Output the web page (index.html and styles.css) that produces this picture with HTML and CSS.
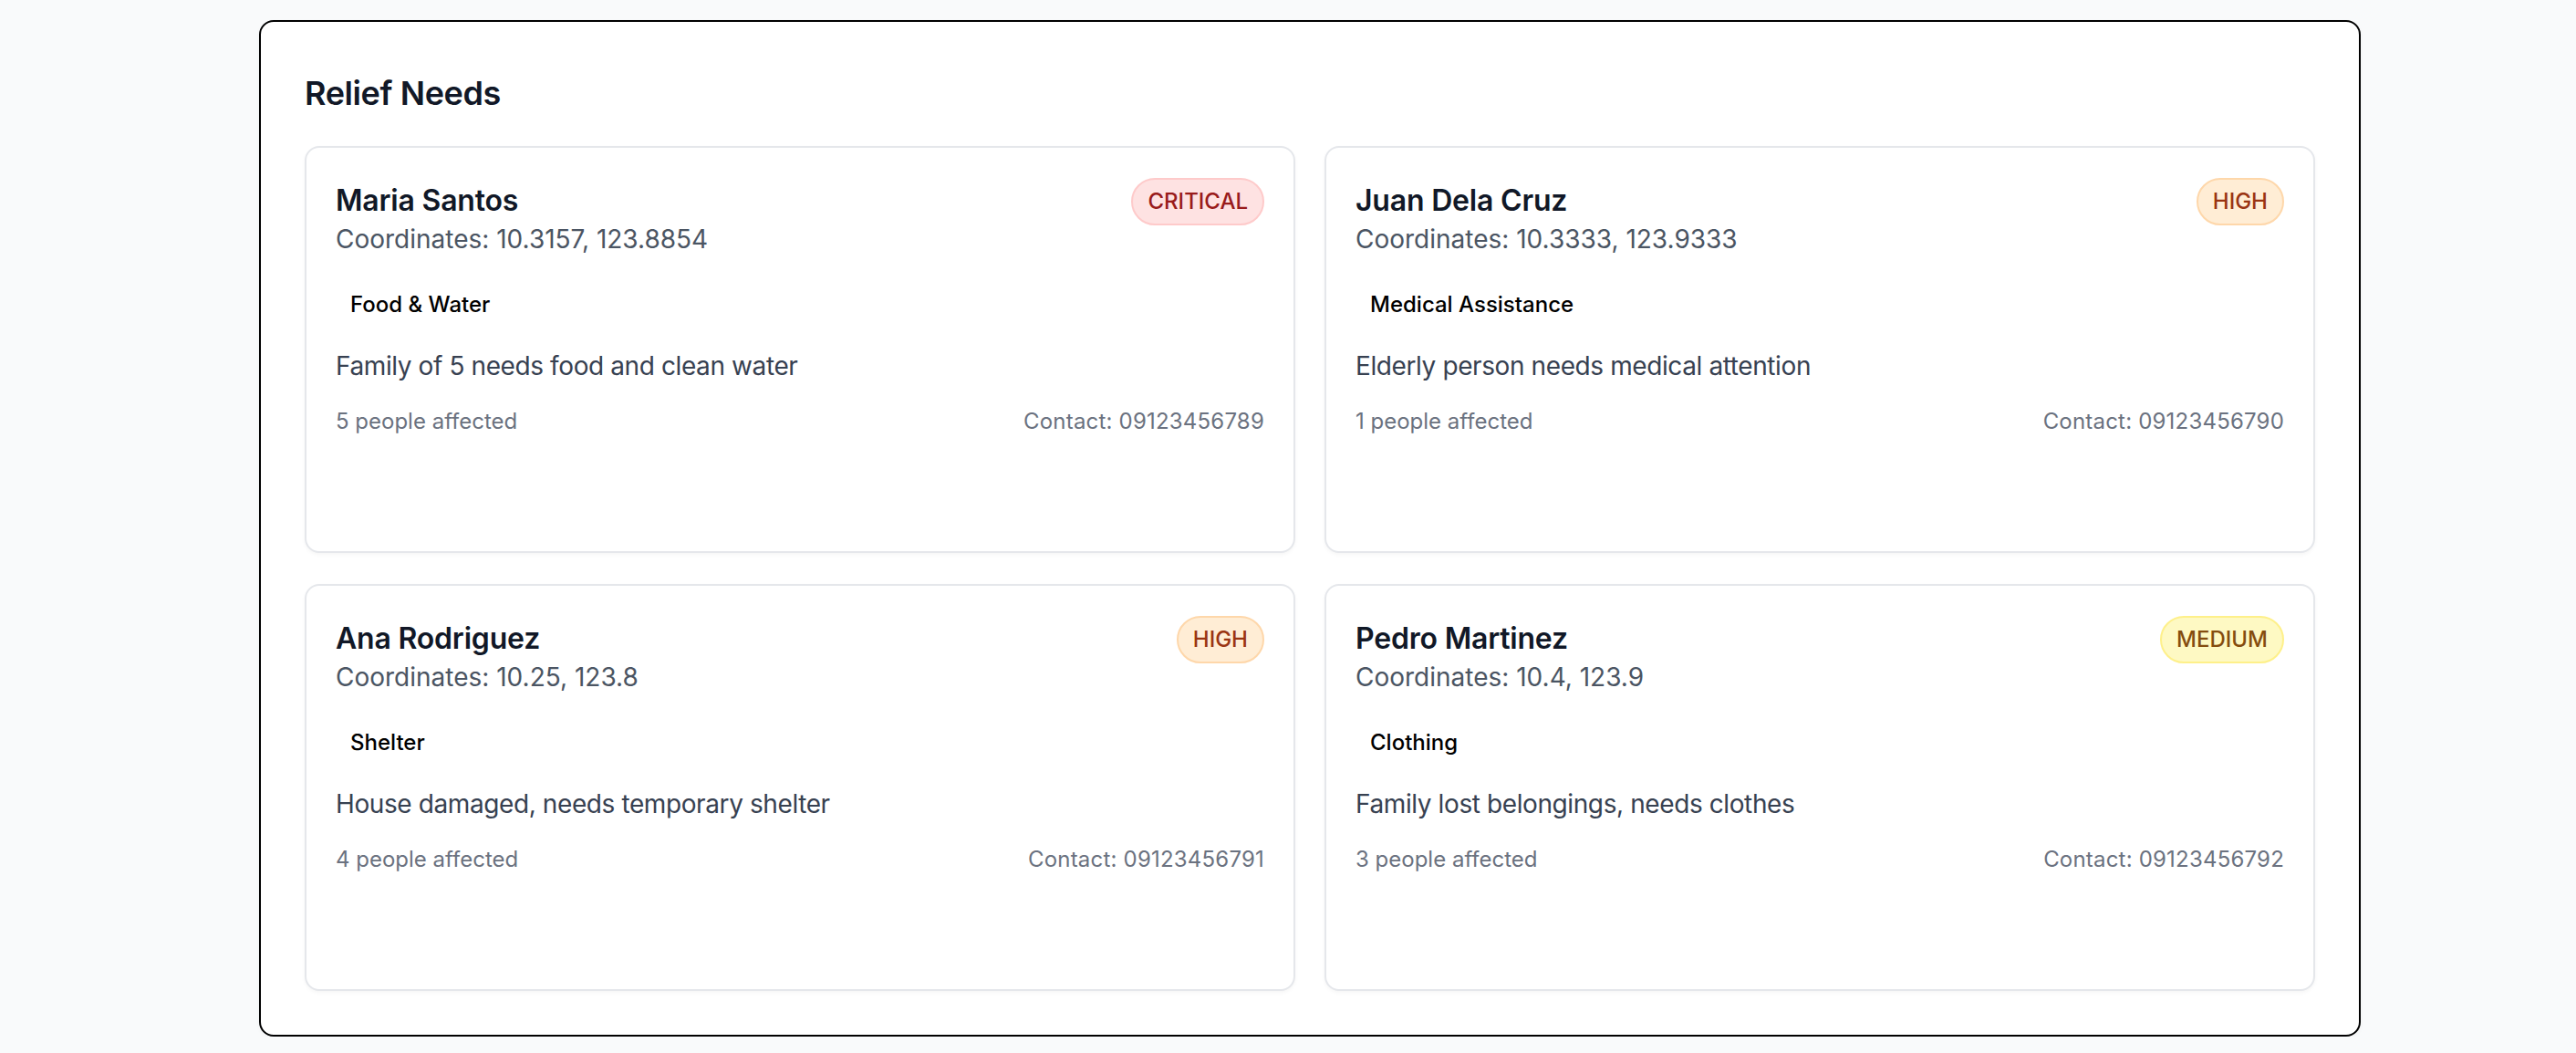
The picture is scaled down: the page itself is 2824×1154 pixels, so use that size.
FILE: index.html
```html
<!DOCTYPE html>
<html lang="en">
<head>
<meta charset="utf-8">
<title>Relief Needs</title>
<link rel="stylesheet" href="styles.css">
</head>
<body>
<main class="panel">
  <h2 class="panel-title">Relief Needs</h2>
  <div class="grid">
    <article class="need">
      <div class="need-head">
        <div>
          <h3 class="need-name">Maria Santos</h3>
          <p class="need-coords">Coordinates: 10.3157, 123.8854</p>
        </div>
        <span class="badge badge-critical">CRITICAL</span>
      </div>
      <div class="need-tags"><span class="tag">Food &amp; Water</span></div>
      <p class="need-desc">Family of 5 needs food and clean water</p>
      <div class="need-foot"><span>5 people affected</span><span>Contact: 09123456789</span></div>
    </article>
    <article class="need">
      <div class="need-head">
        <div>
          <h3 class="need-name">Juan Dela Cruz</h3>
          <p class="need-coords">Coordinates: 10.3333, 123.9333</p>
        </div>
        <span class="badge badge-high">HIGH</span>
      </div>
      <div class="need-tags"><span class="tag">Medical Assistance</span></div>
      <p class="need-desc">Elderly person needs medical attention</p>
      <div class="need-foot"><span>1 people affected</span><span>Contact: 09123456790</span></div>
    </article>
    <article class="need">
      <div class="need-head">
        <div>
          <h3 class="need-name">Ana Rodriguez</h3>
          <p class="need-coords">Coordinates: 10.25, 123.8</p>
        </div>
        <span class="badge badge-high">HIGH</span>
      </div>
      <div class="need-tags"><span class="tag">Shelter</span></div>
      <p class="need-desc">House damaged, needs temporary shelter</p>
      <div class="need-foot"><span>4 people affected</span><span>Contact: 09123456791</span></div>
    </article>
    <article class="need">
      <div class="need-head">
        <div>
          <h3 class="need-name">Pedro Martinez</h3>
          <p class="need-coords">Coordinates: 10.4, 123.9</p>
        </div>
        <span class="badge badge-medium">MEDIUM</span>
      </div>
      <div class="need-tags"><span class="tag">Clothing</span></div>
      <p class="need-desc">Family lost belongings, needs clothes</p>
      <div class="need-foot"><span>3 people affected</span><span>Contact: 09123456792</span></div>
    </article>
  </div>
</main>
</body>
</html>
```

FILE: styles.css
```css
* { box-sizing: border-box; }

html, body {
  margin: 0;
  background: #f9fafb;
}

body {
  padding: 22px 0 0 284px;
  font-family: Inter, "Noto Sans", "Liberation Sans", sans-serif;
  color: #111827;
}

.panel {
  width: 2304px;
  background: #ffffff;
  border: 2px solid #000000;
  border-radius: 16px;
  padding: 48px;
  box-shadow: 0 2px 4px rgba(0, 0, 0, 0.04);
}

.panel-title {
  margin: 2px 0 30px;
  font-size: 36px;
  line-height: 56px;
  font-weight: 600;
  letter-spacing: -0.4px;
  color: #111827;
}

.grid {
  display: grid;
  grid-template-columns: 1fr 1fr;
  gap: 34px 32px;
}

.need {
  min-height: 446px;
  border: 2px solid #e5e7eb;
  border-radius: 16px;
  padding: 34px 32px 32px;
  background: #ffffff;
  box-shadow: 0 2px 4px rgba(0, 0, 0, 0.04);
}

.need-head {
  display: flex;
  justify-content: space-between;
  align-items: flex-start;
}

.need-name {
  margin: 0;
  font-size: 32px;
  line-height: 48px;
  font-weight: 600;
  letter-spacing: -0.2px;
  color: #111827;
}

.need-coords {
  margin: -2px 0 0;
  font-size: 28px;
  line-height: 40px;
  color: #4b5563;
}

.badge {
  margin-top: -1px;
  padding: 8px 16px;
  border: 2px solid;
  border-radius: 999px;
  font-size: 24px;
  line-height: 32px;
  font-weight: 500;
}

.badge-critical { background: #fee2e2; border-color: #fecaca; color: #991b1b; }
.badge-high { background: #ffedd5; border-color: #fed7aa; color: #9a3412; }
.badge-medium { background: #fef9c3; border-color: #fef08a; color: #854d0e; }

.need-tags {
  margin-top: 32px;
}

.tag {
  display: inline-block;
  padding: 4px 16px;
  font-size: 24px;
  line-height: 32px;
  font-weight: 500;
  color: #000000;
}

.need-desc {
  margin: 27px 0 0;
  font-size: 28px;
  line-height: 40px;
  letter-spacing: -0.4px;
  color: #374151;
}

.need-foot {
  margin-top: 25px;
  display: flex;
  justify-content: space-between;
  font-size: 24px;
  line-height: 32px;
  color: #6b7280;
}

.need-foot span:last-child {
  letter-spacing: 0.2px;
}
```
